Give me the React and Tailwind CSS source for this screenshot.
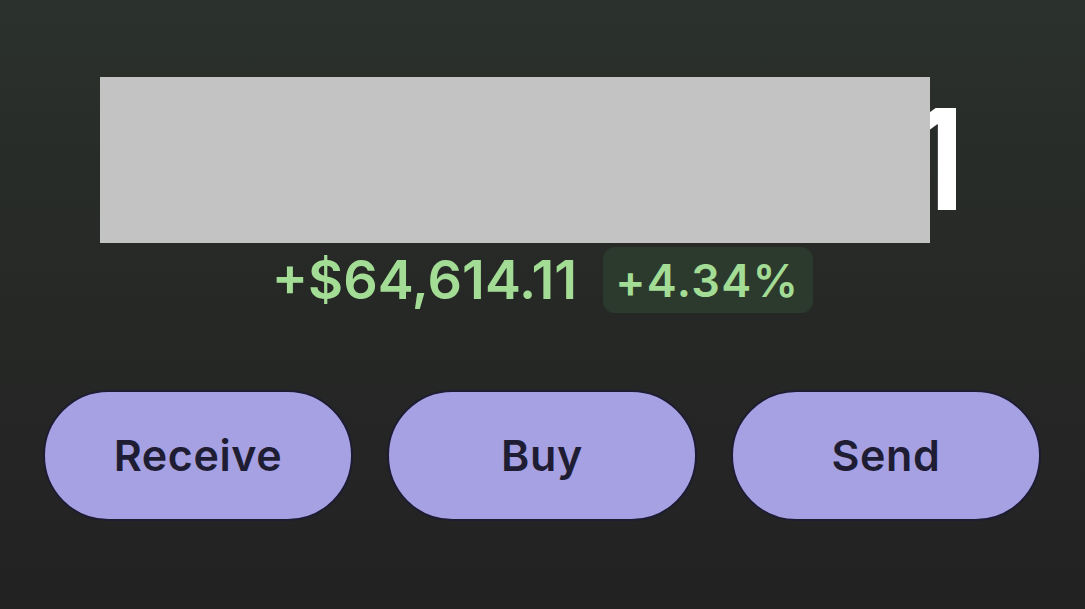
import React from "react";

export default function App() {
  const font = { fontFamily: "Inter, 'Noto Sans', sans-serif" };
  return (
    <div
      className="w-[1085px] h-[609px] overflow-hidden flex flex-col bg-gradient-to-b from-[#2b312c] via-[#262826] to-[#222222]"
      style={font}
    >
      <div className="mt-[77px] pl-[100px] flex items-center h-[166px]">
        <div className="relative z-10 w-[830px] h-[166px] bg-[#c3c3c3]" />
        <span className="text-white text-[140px] leading-none font-semibold -ml-[23px] mt-[-2px]">
          1
        </span>
      </div>
      <div className="mt-[4px] flex items-center justify-center gap-[26px]">
        <span className="text-[#a3dc94] text-[54px] leading-none font-semibold tracking-[0px]">
          +$64,614.11
        </span>
        <span className="h-[66px] pl-[12px] pr-[14px] rounded-[12px] bg-[#2c3a2e] flex items-center text-[#a3dc94] text-[45px] leading-none font-semibold tracking-[1.4px]">
          +4.34%
        </span>
      </div>
      <div className="mt-[77px] pl-[43px] flex gap-[34px]">
        {["Receive", "Buy", "Send"].map((t) => (
          <button
            key={t}
            className="w-[310px] h-[131px] rounded-full bg-[#a6a1e3] border-2 border-[#1e1c33] flex items-center justify-center text-[#1f1d33] text-[43px] font-semibold tracking-[0.6px]"
          >
            {t}
          </button>
        ))}
      </div>
    </div>
  );
}
